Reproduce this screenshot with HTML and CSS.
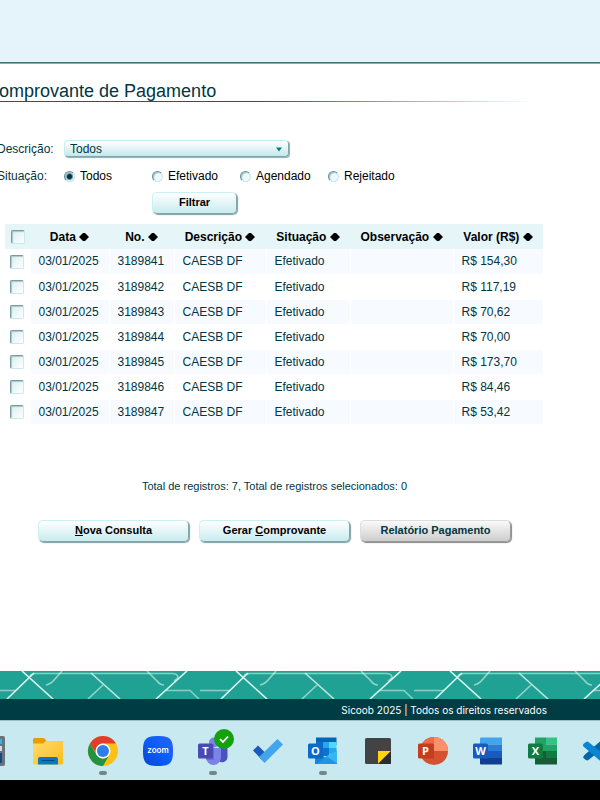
FILE: index.html
```html
<!DOCTYPE html>
<html lang="pt-BR">
<head>
<meta charset="utf-8">
<title>Comprovante de Pagamento</title>
<link rel="stylesheet" href="styles.css">
</head>
<body>
<div class="banner"></div>
<main class="content">
  <h1 class="title">Comprovante de Pagamento</h1>
  <form class="filter">
    <div class="field">
      <label class="field-label" for="descricao">Descrição:</label>
      <div class="select-wrap">
        <select id="descricao" class="select"><option>Todos</option></select>
        <svg class="select-arrow" viewBox="0 0 6 5" width="6" height="5"><path d="M0 0.5h6L3 4.500z" fill="#0f7a87"/></svg>
      </div>
    </div>
    <div class="field" role="radiogroup" aria-labelledby="situacao">
      <span class="field-label" id="situacao">Situação:</span>
      <label class="option"><input class="radio" type="radio" name="situacao" checked>Todos</label>
      <label class="option"><input class="radio" type="radio" name="situacao">Efetivado</label>
      <label class="option"><input class="radio" type="radio" name="situacao">Agendado</label>
      <label class="option"><input class="radio" type="radio" name="situacao">Rejeitado</label>
    </div>
    <button class="button button-filter" type="button">Filtrar</button>
  </form>

  <table class="records">
    <colgroup><col class="c-check"><col class="c-date"><col class="c-number"><col class="c-desc"><col class="c-status"><col class="c-note"><col class="c-value"></colgroup>
    <thead>
      <tr>
        <th><input class="check" type="checkbox" aria-label="Selecionar todos"></th>
        <th>Data <svg class="sort" viewBox="0 0 10 10"><path d="M4 1h2l4 4-4 4H4L0 5z"/></svg></th>
        <th>No. <svg class="sort" viewBox="0 0 10 10"><path d="M4 1h2l4 4-4 4H4L0 5z"/></svg></th>
        <th>Descrição <svg class="sort" viewBox="0 0 10 10"><path d="M4 1h2l4 4-4 4H4L0 5z"/></svg></th>
        <th>Situação <svg class="sort" viewBox="0 0 10 10"><path d="M4 1h2l4 4-4 4H4L0 5z"/></svg></th>
        <th>Observação <svg class="sort" viewBox="0 0 10 10"><path d="M4 1h2l4 4-4 4H4L0 5z"/></svg></th>
        <th>Valor (R$) <svg class="sort" viewBox="0 0 10 10"><path d="M4 1h2l4 4-4 4H4L0 5z"/></svg></th>
      </tr>
    </thead>
    <tbody>
      <tr><td><input class="check" type="checkbox" aria-label="Selecionar 3189841"></td><td>03/01/2025</td><td>3189841</td><td>CAESB DF</td><td>Efetivado</td><td></td><td>R$ 154,30</td></tr>
      <tr><td><input class="check" type="checkbox" aria-label="Selecionar 3189842"></td><td>03/01/2025</td><td>3189842</td><td>CAESB DF</td><td>Efetivado</td><td></td><td>R$ 117,19</td></tr>
      <tr><td><input class="check" type="checkbox" aria-label="Selecionar 3189843"></td><td>03/01/2025</td><td>3189843</td><td>CAESB DF</td><td>Efetivado</td><td></td><td>R$ 70,62</td></tr>
      <tr><td><input class="check" type="checkbox" aria-label="Selecionar 3189844"></td><td>03/01/2025</td><td>3189844</td><td>CAESB DF</td><td>Efetivado</td><td></td><td>R$ 70,00</td></tr>
      <tr><td><input class="check" type="checkbox" aria-label="Selecionar 3189845"></td><td>03/01/2025</td><td>3189845</td><td>CAESB DF</td><td>Efetivado</td><td></td><td>R$ 173,70</td></tr>
      <tr><td><input class="check" type="checkbox" aria-label="Selecionar 3189846"></td><td>03/01/2025</td><td>3189846</td><td>CAESB DF</td><td>Efetivado</td><td></td><td>R$ 84,46</td></tr>
      <tr><td><input class="check" type="checkbox" aria-label="Selecionar 3189847"></td><td>03/01/2025</td><td>3189847</td><td>CAESB DF</td><td>Efetivado</td><td></td><td>R$ 53,42</td></tr>
    </tbody>
  </table>
  <p class="totals">Total de registros: 7, Total de registros selecionados: 0</p>
  <div class="actions">
    <button class="button" type="button"><u>N</u>ova Consulta</button>
    <button class="button" type="button">Gerar <u>C</u>omprovante</button>
    <button class="button button-muted" type="button">Relatório Pagamento</button>
  </div>
</main>

<footer class="footer">
  <svg class="weave" aria-hidden="true">
    <defs>
      <pattern id="weave" width="214" height="28" patternUnits="userSpaceOnUse">
        <g fill="none" stroke="#f0fbf8" stroke-width="1.600">
          <path d="M22 0L53 28M34 2L7 28M187 0L156 28" stroke-opacity=".9"/>
          <path d="M91 2L120 28" stroke-opacity=".75"/>
          <path d="M103 14L88 28M62 0L55 8Q51 13 46 14M147 0L157 10Q160 14 164 14" stroke-opacity=".55"/>
          <path d="M30 5Q31 2.500 36 2.500H172Q178 2.500 178 6.500L174 10M0 19.500H16M166 19.500H190L199 28M200 19.500H214" stroke-opacity=".5"/>
        </g>
      </pattern>
    </defs>
    <rect width="100%" height="28" fill="#1fa193"/>
    <rect width="100%" height="28" fill="url(#weave)"/>
  </svg>
  <p class="copyright">Sicoob 2025 | Todos os direitos reservados</p>
</footer>

<nav class="taskbar" aria-label="Barra de tarefas">
  <button class="app" type="button" aria-label="Calculadora">
    <svg viewBox="0 0 32 32"><rect x="4" y="1" width="24" height="30" rx="2" fill="#6a747c"/><path d="M7 4h18v5H7z" fill="#27b8ee"/><path d="M7 11h18v5H7z" fill="#d8dde0"/><path d="M7 18h18v10H7z" fill="#124a87"/></svg>
  </button>
  <button class="app" type="button" aria-label="Explorador de Arquivos">
    <svg viewBox="0 0 32 32"><defs><linearGradient id="fold" x2="1" y2="1"><stop stop-color="#ffdc6b"/><stop offset="1" stop-color="#fdba22"/></linearGradient></defs><path d="M1 4.500Q1 3 2.500 3H11q1.200 0 2 1l2 2.500H31V12H1z" fill="#e2a006"/><path d="M1 8.500H11L14 6H31V28q0 1.500-1.500 1.500H2.500Q1 29.500 1 28z" fill="url(#fold)"/><path d="M6 29.500V24q0-2 2-2H24q2 0 2 2v5.500z" fill="#0b78c6"/><path d="M9.500 25.500h13" stroke="#06477e" stroke-width="1.200"/></svg>
  </button>
  <button class="app running" type="button" aria-label="Google Chrome">
    <svg viewBox="0 0 32 32"><circle cx="16" cy="16" r="15" fill="#fbc116"/><path d="M3 8.500A15 15 0 0 1 29 8.500H16A7.500 7.500 0 0 0 9.500 12.300L9 18z" fill="#e33b2e"/><path d="M3 8.500A15 15 0 0 0 16 31L22.500 19.800A7.500 7.500 0 0 1 9.500 19.800z" fill="#229342"/><circle cx="16" cy="16" r="7.500" fill="#fff"/><circle cx="16" cy="16" r="6" fill="#2f7de9"/></svg>
  </button>
  <button class="app" type="button" aria-label="Zoom">
    <svg viewBox="0 0 32 32"><defs><linearGradient id="zm" x1="0" y1="1" x2="1" y2="0"><stop stop-color="#0845c7"/><stop offset=".5" stop-color="#0b5cff"/><stop offset="1" stop-color="#2467f0"/></linearGradient></defs><path d="M1 16C1 4 4 1 16 1S31 4 31 16 28 31 16 31 1 28 1 16z" fill="url(#zm)"/><text class="zoom-word" x="16" y="18" text-anchor="middle">zoom</text></svg>
  </button>
  <button class="app running" type="button" aria-label="Microsoft Teams">
    <svg viewBox="0 0 32 32"><circle cx="25" cy="10" r="3.500" fill="#5059c9"/><path d="M21 13h8.500q1 0 1 1v8a5.500 5.500 0 0 1-9 4z" fill="#4b53bc"/><circle cx="17" cy="7.500" r="5" fill="#7b83eb"/><path d="M9 13h15v9.500a7.500 7.500 0 0 1-15 0z" fill="#7b83eb"/><path d="M9 9h8v16H9z" fill="#3a3f9c" opacity=".3"/><rect x="1" y="8.500" width="15" height="15" rx="1.500" fill="#494bb0"/><text class="letter" x="8.500" y="20" text-anchor="middle">T</text></svg>
    <svg class="badge" viewBox="0 0 20 20"><circle cx="10" cy="10" r="10" fill="#13a10e"/><path d="M6 10.200l3 2.800 5-5.500" fill="none" stroke="#fff" stroke-width="1.800"/></svg>
  </button>
  <button class="app" type="button" aria-label="Microsoft To Do">
    <svg viewBox="0 0 32 32"><path d="M1 15.500L6 10.500L16 20.500L11 26z" fill="#185abd"/><path d="M7 22L25.500 4L31 9.500L12.500 28z" fill="#41a5ee"/></svg>
  </button>
  <button class="app running" type="button" aria-label="Outlook">
    <svg viewBox="0 0 32 32"><path d="M9 2.500H29.500V10H9z" fill="#0364b8"/><path d="M9 7h7v7H9z" fill="#0a6fca"/><path d="M16 7h7v7h-7z" fill="#28a8ea"/><path d="M22 7h7.500v7H22z" fill="#50d9ff"/><path d="M9 13h7v8H9z" fill="#064a8c"/><path d="M16 13h6v8h-6z" fill="#0a75d0"/><path d="M22 13h7.500v6H22z" fill="#29a7ea"/><path d="M8 17L19 22.500L30 15.500V29H8z" fill="#1683d8"/><path d="M17 22.500L30 29V15.500z" fill="#35b5f1"/><path d="M9 29L20 21.500L30 28.500V29z" fill="#2094df"/><rect x="1" y="8.500" width="15" height="15" rx="1.500" fill="#0b69c7"/><text class="letter" x="8.500" y="20" text-anchor="middle">O</text></svg>
  </button>
  <button class="app" type="button" aria-label="Notas Autoadesivas">
    <svg viewBox="0 0 32 32"><rect x="3" y="3" width="26" height="26" rx="1.500" fill="#434345"/><path d="M16 29V16H29z" fill="#ffd30f"/><path d="M29 16V28q0 1-1 1H16z" fill="#2b2c30"/></svg>
  </button>
  <button class="app" type="button" aria-label="PowerPoint">
    <svg viewBox="0 0 32 32"><circle cx="17" cy="16" r="14" fill="#d35230"/><path d="M17 2A14 14 0 0 1 31 16H17z" fill="#ff8f6b"/><path d="M17 2A14 14 0 0 0 3 16H17z" fill="#ed6c47"/><rect x="1" y="8.500" width="16" height="15" rx="1.500" fill="#c43e1c"/><text class="letter" x="8.500" y="20" text-anchor="middle">P</text></svg>
  </button>
  <button class="app" type="button" aria-label="Word">
    <svg viewBox="0 0 32 32"><path d="M8 3.500Q8 2.500 9 2.500H30V9.500H8z" fill="#41a5ee"/><path d="M8 9.500h22v6.500H8z" fill="#2b7cd3"/><path d="M8 16h22v7H8z" fill="#185abd"/><path d="M8 23h22v6.500H9q-1 0-1-1z" fill="#103f91"/><rect x="1" y="8.500" width="15" height="15" rx="1.500" fill="#185abd"/><text class="letter" x="8.500" y="20" text-anchor="middle">W</text></svg>
  </button>
  <button class="app" type="button" aria-label="Excel">
    <svg viewBox="0 0 32 32"><path d="M8 2.500H19V16H8z" fill="#21a366"/><path d="M19 2.500H30V9.500H19z" fill="#33c481"/><path d="M19 9.500H30V16H19z" fill="#21a366"/><path d="M8 16H30V29.500H8z" fill="#185c37"/><path d="M19 16H30V23H19z" fill="#107c41"/><rect x="1" y="8.500" width="15" height="15" rx="1.500" fill="#107c41"/><text class="letter" x="8.500" y="20" text-anchor="middle">X</text></svg>
  </button>
  <button class="app" type="button" aria-label="Visual Studio Code">
    <svg viewBox="0 0 32 32"><path d="M23 2L3 19.500Q0 22 2 23.500L4 25Q5.500 26 7 24.500L24 11z" fill="#0065a9"/><path d="M23 30L2 12Q0 10 2 8.500L4 7Q5.500 6 7 7.500L24 21z" fill="#0a84d4"/><path d="M23 1L31 5V27L23 31z" fill="#1f9cf0"/></svg>
  </button>
</nav>
</body>
</html>
```
FILE: styles.css
```css
* { box-sizing: border-box; }

body {
  margin: 0;
  min-height: 100vh;
  display: flex;
  flex-direction: column;
  overflow-x: hidden;
  background: #fff;
  color: #003641;
  font-family: "Liberation Sans", Arial, sans-serif;
  font-size: 12px;
  line-height: 16px;
}

button, input, select { font: inherit; margin: 0; }

.banner {
  height: 64px;
  background: #e5f4fa;
  border-bottom: 1px solid #91aab0;
  box-shadow: inset 0 -1px #3b6f7a;
}

.content {
  flex: 1;
  padding-top: 17px;
  overflow: hidden;
}

.title {
  margin: 0 66px 0 -14px;
  font-size: 18px;
  font-weight: 400;
  line-height: 21px;
  background: linear-gradient(90deg, #056573 50%, #fff) bottom / 100% 1px no-repeat;
}

.filter {
  margin: 38px 0 0 -3px;
  display: flex;
  flex-direction: column;
  align-items: flex-start;
}

.field {
  display: grid;
  grid-template-columns: 67px repeat(4, 88px);
  align-items: center;
  margin-bottom: 11px;
}

.select-wrap {
  grid-column: 2 / 5;
  width: 225px;
  position: relative;
}

.select {
  display: block;
  width: 100%;
  height: 17px;
  padding: 0 5px;
  appearance: none;
  color: #003641;
  border: 1px solid #c7edf1;
  border-right-color: #7fa5aa;
  border-bottom-color: #7fa5aa;
  border-radius: 4px;
  background: linear-gradient(#fff, #c5e8ec);
  box-shadow: 1px 1px 1px #8aaeb3;
}

.select-arrow {
  position: absolute;
  right: 7px;
  top: 7px;
  pointer-events: none;
}

.option {
  display: flex;
  align-items: center;
  gap: 5px;
  color: #000;
}

.radio {
  appearance: none;
  width: 11px;
  height: 11px;
  border: 1px solid #c4e9ee;
  border-top-color: #6b9099;
  border-left-color: #6b9099;
  border-radius: 50%;
  background: #ecfafd;
  box-shadow: inset 1px 1px 1px #9fbfc5;
}

.radio:checked { background: radial-gradient(circle, #003641 2px, #d9eff3 4px); }

.button {
  width: 151px;
  height: 22px;
  padding: 0 0 2px;
  color: #000;
  font-size: 11px;
  font-weight: 700;
  line-height: 16px;
  border: 1px solid #c9f1f5;
  border-right-color: #82a7ac;
  border-bottom-color: #82a7ac;
  border-radius: 5px;
  background: linear-gradient(#fff, #c8ebee);
  box-shadow: 1px 1px 1px #7d9ea3;
}

.button-filter {
  width: 85px;
  margin: -3px 0 0 155px;
}

.button-muted {
  color: #003641;
  border-color: #ddd #999 #999 #ddd;
  background: linear-gradient(#fafafa, #cdcdcd);
  box-shadow: 1px 1px 1px #888;
}

.records {
  margin: 10px 0 0 5px;
  width: 538px;
  table-layout: fixed;
  border-collapse: collapse;
}

.c-check { width: 25px; }
.c-date { width: 79px; }
.c-number { width: 65px; }
.c-desc { width: 92px; }
.c-status { width: 84px; }
.c-note { width: 103px; }
.c-value { width: 90px; }

.records th {
  height: 25px;
  padding: 0;
  color: #000;
  background: #e5f5f8;
  white-space: nowrap;
}

.records td {
  height: 25px;
  padding: 0 8px;
  background-clip: padding-box;
  border-right: 1px solid #fff;
  border-bottom: 1px solid #fff;
}

.records tbody tr:nth-child(odd) td + td { background-color: #f7fbff; }
.records td:first-child { padding: 0; text-align: center; }

.check {
  appearance: none;
  display: block;
  width: 14px;
  height: 14px;
  margin: 1px auto 0;
  border: 1px solid #c6eaee;
  border-top-color: #7c9ba1;
  border-left-color: #7c9ba1;
  border-radius: 2px;
  background: linear-gradient(135deg, #d8eef1, #fff);
  box-shadow: inset 1px 1px 1px #adc6cb;
}

.sort {
  width: 10px;
  height: 10px;
  vertical-align: -1px;
}

.totals {
  margin: 53px 0 0;
  width: 549px;
  font-size: 11px;
  text-align: center;
}

.actions {
  margin: 26px 0 0 38px;
  display: flex;
  gap: 10px;
}

.weave {
  display: block;
  width: 100%;
  height: 28px;
}

.copyright {
  margin: 0;
  padding: 3px 53px 2px 0;
  text-align: right;
  color: #fff;
  background: #003c44;
  font-family: Inter, "Liberation Sans", sans-serif;
  font-size: 10px;
}

.taskbar {
  display: flex;
  height: 80px;
  padding-bottom: 20px;
  overflow: hidden;
  background: linear-gradient(#c9e9f1 59px, #000 59px);
  border-top: 1px solid #9fbcc2;
}

.app {
  position: relative;
  flex: 0 0 55px;
  padding: 0;
  border: 0;
  background: none;
  display: flex;
  align-items: center;
  justify-content: center;
}

.app:first-child { margin-left: -35px; }

.app > svg { width: 32px; height: 32px; }

.app > .badge {
  position: absolute;
  width: 20px;
  height: 20px;
  top: 8px;
  right: 6px;
}

.running::after {
  content: "";
  position: absolute;
  left: 24px;
  bottom: 5px;
  width: 8px;
  height: 4px;
  border-radius: 2px;
  background: #72868b;
}

.letter {
  font: 700 11px "Open Sans", sans-serif;
  fill: #fff;
}

.zoom-word {
  font: 600 8px Inter, sans-serif;
  fill: #fff;
}
```
